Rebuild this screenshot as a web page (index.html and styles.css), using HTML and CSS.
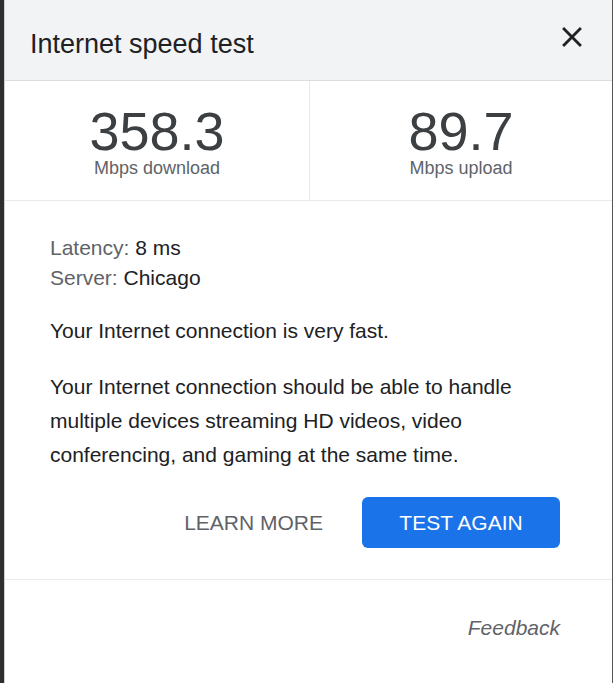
FILE: index.html
```html
<!DOCTYPE html>
<html lang="en">
<head>
  <meta charset="UTF-8">
  <meta name="viewport" content="width=device-width, initial-scale=1.0">
  <title>Internet speed test</title>
  <link rel="stylesheet" href="styles.css">
</head>
<body>
  <div class="panel">
    <div class="header">
      <h1>Internet speed test</h1>
      <button class="close" aria-label="Close">
        <svg width="34" height="34" viewBox="0 0 24 24"><path d="M19 6.41L17.59 5 12 10.59 6.41 5 5 6.41 10.59 12 5 17.59 6.41 19 12 13.41 17.59 19 19 17.59 13.41 12z" fill="#202124"/></svg>
      </button>
    </div>

    <div class="stats">
      <div class="stat">
        <div class="value">358.3</div>
        <div class="unit">Mbps download</div>
      </div>
      <div class="stat">
        <div class="value">89.7</div>
        <div class="unit">Mbps upload</div>
      </div>
    </div>

    <div class="content">
      <div class="details">
        <div><span class="label">Latency:</span> 8 ms</div>
        <div><span class="label">Server:</span> Chicago</div>
      </div>
      <p class="summary">Your Internet connection is very fast.</p>
      <p class="desc">Your Internet connection should be able to handle multiple devices streaming HD videos, video conferencing, and gaming at the same time.</p>
      <div class="actions">
        <button class="learn">LEARN MORE</button>
        <button class="again">TEST AGAIN</button>
      </div>
    </div>

    <div class="footer">
      <a href="#" class="feedback">Feedback</a>
    </div>
  </div>
</body>
</html>
```

FILE: styles.css
```css
html {
  background: #fff;
}
body {
  font-family: "Liberation Sans", Arial, sans-serif;
  margin: 0;
  border-left: 4px solid #2e2e2e;
  height: 683px;
  box-sizing: border-box;
  color: #202124;
}
.panel {
  width: 609px;
  height: 683px;
  box-sizing: border-box;
  border-left: 1px solid #cfcfcf;
  border-right: 1px solid #555;
  background: #fff;
}
.header {
  display: flex;
  justify-content: space-between;
  align-items: flex-start;
  background-color: #f1f3f4;
  border-bottom: 1px solid #dadce0;
  padding: 28px 23px 20px 25px;
}
.header h1 {
  margin: 0;
  font-size: 27px;
  font-weight: normal;
  line-height: 32px;
}
.close {
  border: none;
  background: none;
  padding: 0;
  margin-top: -8px;
  width: 34px;
  height: 34px;
  cursor: pointer;
}
.close svg {
  display: block;
}
.stats {
  display: grid;
  grid-template-columns: 304px 1fr;
  border-bottom: 1px solid #e8eaed;
}
.stat {
  text-align: center;
  padding: 22px 0 23px;
}
.stat + .stat {
  border-left: 1px solid #e8eaed;
}
.value {
  font-size: 54px;
  line-height: 56px;
  color: #3c4043;
}
.unit {
  font-size: 18px;
  line-height: 18px;
  color: #5f6368;
}
.content {
  padding: 32px 52px 31px 45px;
  font-size: 21px;
  border-bottom: 1px solid #e8eaed;
}
.details {
  line-height: 30px;
}
.label {
  color: #5f6368;
}
.summary {
  margin: 23px 0 0;
  line-height: 30px;
}
.desc {
  margin: 24px 0 0;
  line-height: 34px;
}
.actions {
  display: flex;
  justify-content: flex-end;
  align-items: center;
  gap: 16px;
  margin-top: 25px;
}
.actions button {
  font-family: "Liberation Sans", Arial, sans-serif;
  font-size: 21px;
  border: none;
  cursor: pointer;
  height: 51px;
}
.learn {
  background: none;
  color: #5f6368;
  padding: 0 23px;
}
.again {
  background-color: #1a73e8;
  color: #fff;
  border-radius: 6px;
  padding: 0 37px;
  width: 198px;
}
.footer {
  display: flex;
  justify-content: flex-end;
  padding: 33px 52px 0 0;
}
.feedback {
  font-size: 21px;
  line-height: 30px;
  font-style: italic;
  color: #5f6368;
  text-decoration: none;
}
```
